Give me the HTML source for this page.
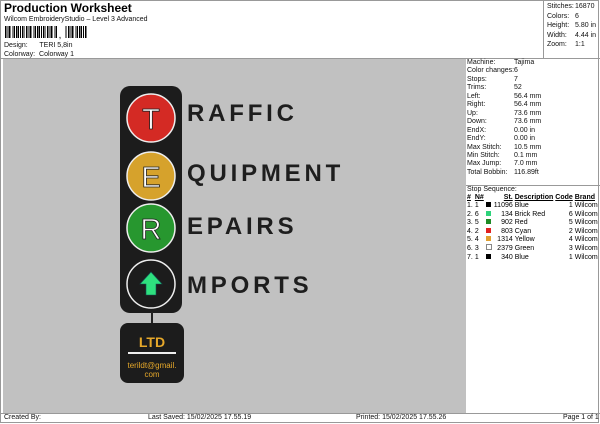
<!DOCTYPE html><html><head><style>
body{margin:0;width:600px;height:424px;background:#fff;font-family:"Liberation Sans",sans-serif;position:relative;overflow:hidden}
.a{position:absolute;white-space:nowrap}
.s{font-size:7px;color:#111}
table{border-collapse:collapse;font-size:7px}
td{padding:0 1px;line-height:8.4px}
.big{font-weight:bold;font-size:24px;color:#1e1e1e;letter-spacing:3.8px}
</style></head><body>
<div class="a" style="left:0;top:0;width:599px;height:423px;border:1px solid #999;box-sizing:border-box"></div>
<div class="a" style="left:4px;top:1px;font-size:12px;font-weight:bold">Production Worksheet</div>
<div class="a s" style="left:4px;top:16px">Wilcom EmbroideryStudio – Level 3 Advanced</div>
<div class="a" style="left:5px;top:26px;width:82px;height:12px;background:repeating-linear-gradient(90deg,#000 0 1.5px,#fff 1.5px 2.6px,#000 2.6px 3.4px,#fff 3.4px 4.2px)"></div>
<div class="a" style="left:57px;top:26px;width:8px;height:14px;background:#fff"></div>
<div class="a s" style="left:59px;top:33px;font-weight:bold">,</div>
<div class="a s" style="left:4px;top:42px">Design:&nbsp;&nbsp;&nbsp;&nbsp;&nbsp;&nbsp;TERI 5,8in</div>
<div class="a s" style="left:4px;top:51px">Colorway:&nbsp; Colorway 1</div>
<div class="a" style="left:543px;top:0;width:1px;height:58px;background:#999"></div>
<div class="a s" style="left:547px;top:2px;line-height:9.5px">Stitches:<br>Colors:<br>Height:<br>Width:<br>Zoom:</div>
<div class="a s" style="left:575px;top:2px;line-height:9.5px">16870<br>6<br>5.80 in<br>4.44 in<br>1:1</div>
<div class="a" style="left:0;top:58px;width:600px;height:1px;background:#999"></div>
<div class="a" style="left:3px;top:59px;width:460px;height:354px;background:#c1c1c1"></div>
<div class="a" style="left:463px;top:59px;width:3px;height:354px;background:#c1c1c1"></div>
<div class="a s" style="left:467px;top:59px;line-height:8.45px">Machine:<br>Color changes:<br>Stops:<br>Trims:<br>Left:<br>Right:<br>Up:<br>Down:<br>EndX:<br>EndY:<br>Max Stitch:<br>Min Stitch:<br>Max Jump:<br>Total Bobbin:</div>
<div class="a s" style="left:514px;top:59px;line-height:8.45px">Tajima<br>6<br>7<br>52<br>56.4 mm<br>56.4 mm<br>73.6 mm<br>73.6 mm<br>0.00 in<br>0.00 in<br>10.5 mm<br>0.1 mm<br>7.0 mm<br>116.89ft</div>
<div class="a" style="left:466px;top:185px;width:134px;height:1px;background:#999"></div>
<div class="a s" style="left:467px;top:186px">Stop Sequence:</div>
<table class="a" style="left:466px;top:194px;width:132px">
<tr style="font-weight:bold;text-decoration:underline"><td>#</td><td>N#</td><td></td><td style="text-align:right">St.</td><td>Description</td><td>Code</td><td>Brand</td></tr>
<tr><td>1.</td><td>1</td><td><i style="display:inline-block;width:5px;height:5px;background:#000"></i></td><td align=right>11096</td><td>Blue</td><td align=right>1</td><td>Wilcom</td></tr>
<tr><td>2.</td><td>6</td><td><i style="display:inline-block;width:5px;height:5px;background:#2dd37a"></i></td><td align=right>134</td><td>Brick Red</td><td align=right>6</td><td>Wilcom</td></tr>
<tr><td>3.</td><td>5</td><td><i style="display:inline-block;width:5px;height:5px;background:#1e8a25"></i></td><td align=right>902</td><td>Red</td><td align=right>5</td><td>Wilcom</td></tr>
<tr><td>4.</td><td>2</td><td><i style="display:inline-block;width:5px;height:5px;background:#e02020"></i></td><td align=right>803</td><td>Cyan</td><td align=right>2</td><td>Wilcom</td></tr>
<tr><td>5.</td><td>4</td><td><i style="display:inline-block;width:5px;height:5px;background:#e0a030"></i></td><td align=right>1314</td><td>Yellow</td><td align=right>4</td><td>Wilcom</td></tr>
<tr><td>6.</td><td>3</td><td><i style="display:inline-block;width:4px;height:4px;border:1px solid #888;background:#fff"></i></td><td align=right>2379</td><td>Green</td><td align=right>3</td><td>Wilcom</td></tr>
<tr><td>7.</td><td>1</td><td><i style="display:inline-block;width:5px;height:5px;background:#000"></i></td><td align=right>340</td><td>Blue</td><td align=right>1</td><td>Wilcom</td></tr>
</table>
<div class="a" style="left:0;top:413px;width:600px;height:1px;background:#999"></div>
<div class="a s" style="left:4px;top:414px">Created By:</div>
<div class="a s" style="left:148px;top:414px">Last Saved: 15/02/2025 17.55.19</div>
<div class="a s" style="left:356px;top:414px">Printed: 15/02/2025 17.55.26</div>
<div class="a s" style="left:563px;top:414px">Page 1 of 1</div>
<svg class="a" style="left:0;top:0" width="470" height="412" font-family="Liberation Sans,sans-serif">
<rect x="120" y="86" width="62" height="227" rx="10" fill="#1c1c1c"/>
<line x1="152" y1="312" x2="152" y2="325" stroke="#222" stroke-width="2"/>
<rect x="120" y="323" width="64" height="60" rx="8" fill="#1c1c1c"/>
<g stroke="#eee" stroke-width="1.5">
<circle cx="151" cy="118" r="24" fill="#d42a24"/>
<circle cx="151" cy="176" r="24" fill="#d6a22c"/>
<circle cx="151" cy="228" r="24" fill="#27972f"/>
<circle cx="151" cy="284" r="24" fill="#1c1c1c"/>
</g>
<g font-size="29" fill="#fff" stroke="#222" stroke-width="0.8" text-anchor="middle">
<text x="151" y="129">T</text><text x="151" y="187">E</text><text x="151" y="239">R</text>
</g>
<path d="M151 272 L140 284 L146 284 L146 295 L156 295 L156 284 L162 284 Z" fill="#2ee07e" stroke="#155" stroke-width="0.6"/>
<text x="152" y="347" font-size="14" font-weight="bold" fill="#e6a82a" text-anchor="middle">LTD</text>
<rect x="128" y="352" width="48" height="2" fill="#eee"/>
<text x="152" y="368" font-size="8" fill="#e6a82a" text-anchor="middle">terildt@gmail.</text>
<text x="152" y="377" font-size="8" fill="#e6a82a" text-anchor="middle">com</text>
</svg>
<div class="a big" style="left:187px;top:100px">RAFFIC</div>
<div class="a big" style="left:187px;top:160px">QUIPMENT</div>
<div class="a big" style="left:187px;top:213px">EPAIRS</div>
<div class="a big" style="left:187px;top:272px">MPORTS</div>
</body></html>
